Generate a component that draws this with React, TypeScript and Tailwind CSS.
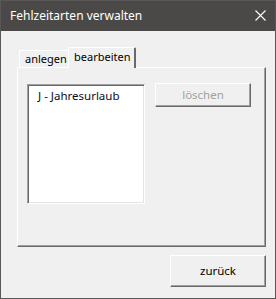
export default function App() {
  return (
    <div className="w-[276px] h-[299px] flex flex-col bg-[#f0f0f0] border border-[#5a5856] font-['Noto_Sans',sans-serif] text-[11.5px] text-black">
      {/* Title bar */}
      <div className="h-[30px] shrink-0 flex items-center justify-between bg-[#4b4947] pl-[9px] pr-[9px]">
        <span className="text-[12px] text-white leading-none pb-[1px]">Fehlzeitarten verwalten</span>
        <svg width="11" height="11" viewBox="0 0 11 11" className="mb-[1px]">
          <path d="M0.5 0.5 L10.5 10.5 M10.5 0.5 L0.5 10.5" stroke="#ffffff" strokeWidth="1.1" fill="none" />
        </svg>
      </div>

      <div className="flex flex-col pl-[16px] pr-[9px] pt-[16px]">
        {/* Tabs */}
        <div className="flex items-end h-[20px] pl-[2px] relative z-10 text-[11px]">
          <div className="h-[17px] w-[49px] border-t border-l border-white rounded-tl-[2px] flex items-start pl-[5px] leading-[16px]">
            anlegen
          </div>
          <div className="h-[21px] w-[68px] -mb-[1px] bg-[#f0f0f0] border-t border-l border-white border-r-2 border-r-[#696969] rounded-t-[2px] pl-[5px] leading-[17px]">
            bearbeiten
          </div>
        </div>

        {/* Panel */}
        <div className="h-[180px] w-[249px] border-t border-l border-white border-r border-b border-r-[#696969] border-b-[#696969] shadow-[inset_-1px_-1px_0_#a0a0a0] flex items-start gap-[10px] pl-[9px] pt-[16px]">
          <div className="w-[118px] h-[120px] bg-white border-t border-l border-[#a0a0a0] border-r border-b border-r-white border-b-white shadow-[inset_1px_1px_0_#696969,inset_-1px_-1px_0_#e3e3e3] pl-[10px] pt-[2px] text-[#0a0a28]">
            J - Jahresurlaub
          </div>
          <div className="-mt-[1px] w-[96px] h-[24px] flex items-center justify-center border-t border-l border-white border-r border-b border-r-[#696969] border-b-[#696969] shadow-[inset_-1px_-1px_0_#a0a0a0] text-[#a0a0a0]">
            löschen
          </div>
        </div>

        {/* Footer */}
        <div className="flex justify-end pt-[8px]">
          <div className="w-[96px] h-[32px] flex items-center justify-center border-t border-l border-white border-r border-b border-r-[#696969] border-b-[#696969] shadow-[inset_-1px_-1px_0_#a0a0a0]">
            zurück
          </div>
        </div>
      </div>
    </div>
  );
}
